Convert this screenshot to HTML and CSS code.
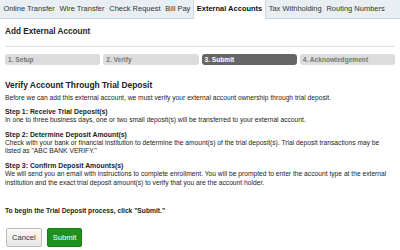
FILE: index.html
```html
<!DOCTYPE html>
<html lang="en">
<head>
    <meta charset="UTF-8">
    <title>Add External Account</title>
    <link rel="stylesheet" href="styles.css">
</head>
<body>
    <div class="tabs">
        <a href="#" class="tab">Online Transfer</a>
        <a href="#" class="tab">Wire Transfer</a>
        <a href="#" class="tab">Check Request</a>
        <a href="#" class="tab">Bill Pay</a>
        <a href="#" class="tab active">External Accounts</a>
        <a href="#" class="tab">Tax Withholding</a>
        <a href="#" class="tab">Routing Numbers</a>
    </div>
    <div class="container">
        <h1 class="page-title">Add External Account</h1>
        <div class="steps">
            <div class="step">1. Setup</div>
            <div class="step">2. Verify</div>
            <div class="step current">3. Submit</div>
            <div class="step">4. Acknowledgement</div>
        </div>
        <h2 class="section-title">Verify Account Through Trial Deposit</h2>
        <p class="text">Before we can add this external account, we must verify your external account ownership through trial deposit.</p>
        <div class="block first">
            <div class="step-name">Step 1: Receive Trial Deposit(s)</div>
            <p class="text">In one to three business days, one or two small deposit(s) will be transferred to your external account.</p>
        </div>
        <div class="block">
            <div class="step-name">Step 2: Determine Deposit Amount(s)</div>
            <p class="text">Check with your bank or financial institution to determine the amount(s) of the trial deposit(s). Trial deposit transactions may be listed as "ABC BANK VERIFY."</p>
        </div>
        <div class="block">
            <div class="step-name">Step 3: Confirm Deposit Amounts(s)</div>
            <p class="text">We will send you an email with instructions to complete enrollment. You will be prompted to enter the account type at the external institution and the exact trial deposit amount(s) to verify that you are the account holder.</p>
        </div>
        <p class="text strong">To begin the Trial Deposit process, click "Submit."</p>
        <div class="actions">
            <button class="btn cancel">Cancel</button>
            <button class="btn submit">Submit</button>
        </div>
    </div>
</body>
</html>
```

FILE: styles.css
```css
:root {
    --font-family: 'Liberation Sans', Arial, sans-serif;
    --text-color: #222;
}

body {
    margin: 0;
    font-family: var(--font-family);
    color: var(--text-color);
    background: #fff;
    width: 400px;
}

.tabs {
    display: flex;
    height: 18px;
    background: #e9eef3;
    border-bottom: 1px solid #cfd6dd;
    padding-left: 1px;
}

.tab {
    font-size: 7.5px;
    color: #333;
    text-decoration: none;
    padding: 0 2.4px;
    line-height: 18px;
}

.tab.active {
    background: #fff;
    color: #111;
    font-weight: bold;
    border-left: 1px solid #cfd6dd;
    border-right: 1px solid #cfd6dd;
    height: 19px;
    padding: 0 3px;
}

.container {
    padding: 0 5px;
}

.page-title {
    font-size: 8.2px;
    font-weight: bold;
    margin: 0;
    padding: 8px 0 10px;
    border-bottom: 1px solid #e3e0d6;
}

.steps {
    display: flex;
    gap: 3px;
    margin-top: 7px;
}

.step {
    flex: 1;
    background: #dcdcdc;
    color: #777;
    font-size: 6.6px;
    font-weight: bold;
    line-height: 11px;
    height: 11px;
    padding-left: 3px;
    border-radius: 3px;
}

.step.current {
    background: #666;
    color: #fff;
}

.section-title {
    font-size: 8.4px;
    font-weight: bold;
    margin: 15px 0 0;
}

.text {
    font-size: 6.7px;
    line-height: 8.6px;
    margin: 4px 0 0;
}

.block {
    margin-top: 5.5px;
}

.block.first {
    margin-top: 4px;
}

.block .text {
    margin-top: 0;
}

.step-name {
    font-size: 6.9px;
    font-weight: bold;
    line-height: 9px;
}

.strong {
    font-weight: bold;
    margin-top: 19px;
}

.actions {
    display: flex;
    gap: 5px;
    margin-top: 13px;
    padding-left: 1px;
}

.btn {
    font-family: var(--font-family);
    font-size: 7.6px;
    height: 19px;
    padding: 0 5px;
    border-radius: 2px;
    cursor: pointer;
}

.cancel {
    background: linear-gradient(180deg, #fafafa, #e6e6e6);
    border: 1px solid #bbb;
    color: #333;
}

.submit {
    background: #1f8f1f;
    border: 1px solid #1a7d1a;
    color: #fff;
}
```
